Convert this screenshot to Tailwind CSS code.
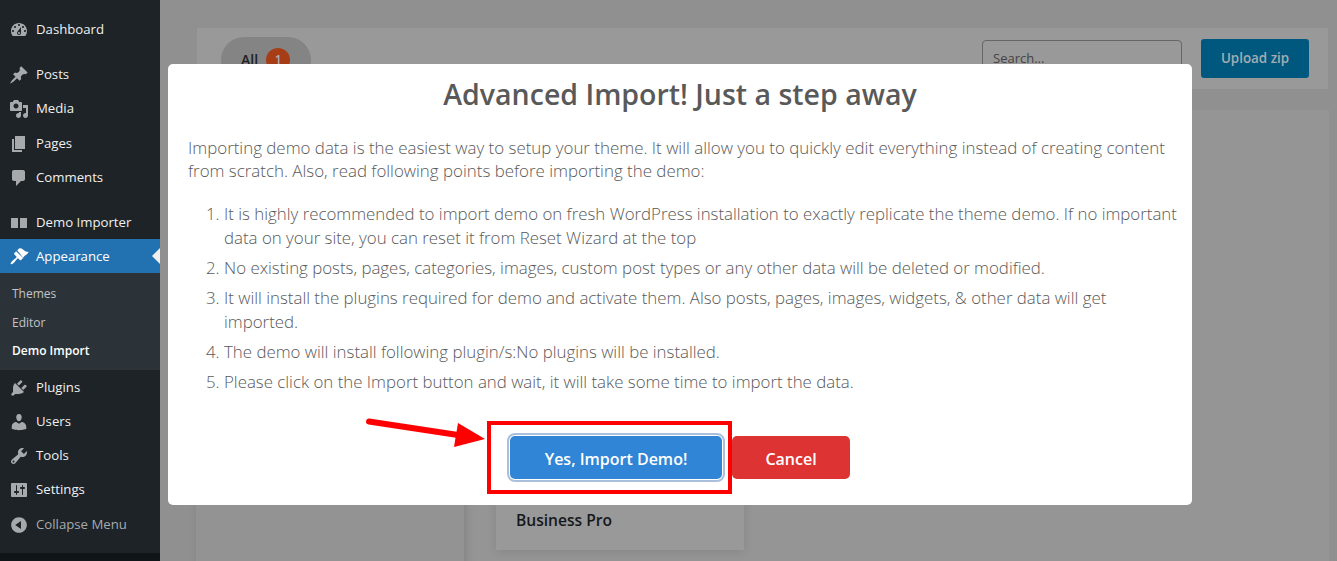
<!DOCTYPE html>
<html lang="en">
<head>
    <meta charset="UTF-8">
    <title>Demo Import</title>
    <script src="https://cdn.jsdelivr.net/npm/@tailwindcss/browser@4"></script>
</head>
<body class="w-[1337px] h-[561px] overflow-hidden flex font-['Open_Sans',sans-serif] bg-[#909090]">
    <!-- admin sidebar -->
    <nav class="w-[160px] h-full shrink-0 flex flex-col bg-[#1d2327] text-[13.2px] text-[#f0f0f1]">
        <div class="flex-1 pt-3">
            <a class="h-[34px] pt-[2px] flex items-center gap-[7px] pl-[9px]"><svg class="w-5 h-5 fill-[#a7aaad]" viewBox="0 0 20 20"><path d="M3.76 16h12.48c1.1-1.37 1.76-3.11 1.76-5 0-4.42-3.58-8-8-8s-8 3.58-8 8c0 1.89.66 3.63 1.76 5zM10 4c.55 0 1 .45 1 1s-.45 1-1 1-1-.45-1-1 .45-1 1-1zM6 6c.55 0 1 .45 1 1s-.45 1-1 1-1-.45-1-1 .45-1 1-1zm8 0c.55 0 1 .45 1 1s-.45 1-1 1-1-.45-1-1 .45-1 1-1zm-5.37 5.55L12 7v6c0 1.1-.9 2-2 2s-2-.9-2-2c0-.57.24-1.08.63-1.45zM4 10c.55 0 1 .45 1 1s-.45 1-1 1-1-.45-1-1 .45-1 1-1zm12 0c.55 0 1 .45 1 1s-.45 1-1 1-1-.45-1-1 .45-1 1-1zm-5 3c0-.55-.45-1-1-1s-1 .45-1 1 .45 1 1 1 1-.45 1-1z"/></svg>Dashboard</a>
            <a class="h-[34px] pt-[2px] mt-[11px] flex items-center gap-[7px] pl-[9px]"><svg class="w-5 h-5 fill-[#a7aaad]" viewBox="0 0 20 20"><path d="M10.44 3.02l1.82-1.82 6.36 6.35-1.83 1.82c-1.05-.68-2.48-.57-3.41.36l-.75.75c-.92.93-1.04 2.35-.35 3.41l-1.83 1.82-2.41-2.41-2.8 2.79c-.42.42-3.38 2.71-3.8 2.29s1.86-3.39 2.28-3.81l2.79-2.79L4.1 9.36l1.83-1.82c1.05.69 2.48.57 3.4-.36l.75-.75c.93-.92 1.05-2.35.36-3.41z"/></svg>Posts</a>
            <a class="h-[34px] pt-[2px] flex items-center gap-[7px] pl-[9px]"><svg class="w-5 h-5 fill-[#a7aaad]" viewBox="0 0 20 20"><path d="M13 11V4c0-.55-.45-1-1-1h-1.67L9 1H5L3.67 3H2c-.55 0-1 .45-1 1v7c0 .55.45 1 1 1h10c.55 0 1-.45 1-1zM7 4.5c1.38 0 2.5 1.12 2.5 2.5S8.38 9.5 7 9.5 4.5 8.38 4.5 7 5.62 4.5 7 4.5zM14 6h5v10.5c0 1.38-1.12 2.5-2.5 2.5S14 17.88 14 16.5s1.12-2.5 2.5-2.5c.17 0 .34.02.5.05V9h-3V6zm-4 8.05V13h2v3.5c0 1.38-1.12 2.5-2.5 2.5S7 17.88 7 16.5 8.12 14 9.5 14c.17 0 .34.02.5.05z"/></svg>Media</a>
            <a class="h-[35px] pt-[2px] flex items-center gap-[7px] pl-[9px]"><svg class="w-5 h-5 fill-[#a7aaad]" viewBox="0 0 20 20"><path d="M6 15V2h10v13H6zm-1 1h8v2H3V5h2v11z"/></svg>Pages</a>
            <a class="h-[34px] pt-[2px] flex items-center gap-[7px] pl-[9px]"><svg class="w-5 h-5 fill-[#a7aaad]" viewBox="0 0 20 20"><path d="M5 2h9c1.1 0 2 .9 2 2v7c0 1.1-.9 2-2 2h-2l-5 5v-5H5c-1.1 0-2-.9-2-2V4c0-1.1.9-2 2-2z"/></svg>Comments</a>
            <a class="h-[34px] pt-[2px] mt-[11px] flex items-center gap-[7px] pl-[9px]"><svg class="w-5 h-5 fill-[#a7aaad]" viewBox="0 0 20 20"><path d="M2 5h7v10H2zM11 5h7v10h-7z"/></svg>Demo Importer</a>
            <a class="relative h-[34px] pt-[2px] flex items-center gap-[7px] pl-[9px] bg-[#2271b1] text-white"><svg class="w-5 h-5 fill-white" viewBox="0 0 20 20"><path d="M8.2 3.2l1.6-1.5c1-.7 2.4-.5 3.6.3 1.3.9 1.8 1.6 3 2.2 1 .5 2 .7 3.2.5-.7 1.9-2 3-3.2 3.6-.8.4-1.2 1.1-1.7 1.7l-.6.7zM7.2 4.2l6.9 6.9-1.9 1.8c-.4.4-1 .4-1.4 0L9.6 11.7c-.4-.4-1-.4-1.4 0-.7.7-1.3 1.7-2 2.5-.3.4-.6.8-1 1.2-1.4 1.4-2.8 2.2-3.4 1.7s.3-2 1.7-3.4c.4-.4.8-.7 1.2-1 .8-.7 1.8-1.3 2.5-2 .4-.4.4-1 0-1.4L5.4 7.4c-.4-.4-.4-1 0-1.4z"/></svg>Appearance<span class="absolute right-0 top-[9px] border-y-8 border-r-8 border-y-transparent border-r-[#f0f0f1]"></span></a>
            <div class="h-[97px] pt-[6px] bg-[#2c3338] text-xs text-[#c3c4c7]">
                <a class="h-[29px] flex items-center pl-3">Themes</a>
                <a class="h-[29px] flex items-center pl-3">Editor</a>
                <a class="h-[28px] flex items-center pl-3 font-semibold text-white">Demo Import</a>
            </div>
            <a class="h-[34px] pt-[2px] flex items-center gap-[7px] pl-[9px]"><svg class="w-5 h-5 fill-[#a7aaad]" viewBox="0 0 20 20"><path d="M13.11 4.36L9.87 7.6 8 5.73l3.24-3.24c.35-.34 1.05-.2 1.56.32.52.51.66 1.21.31 1.55zm-8 1.77l.91-1.12 9.01 9.01-1.19.84c-.71.71-2.63 1.16-3.82 1.16H6.14L4.9 17.26c-.59.59-1.54.59-2.12 0-.59-.58-.59-1.53 0-2.12l1.24-1.24v-3.88c0-1.13.4-3.19 1.09-3.89zm7.26 3.97l3.24-3.24c.34-.35 1.04-.21 1.55.31.52.51.66 1.21.31 1.55l-3.24 3.25z"/></svg>Plugins</a>
            <a class="h-[34px] pt-[2px] flex items-center gap-[7px] pl-[9px]"><svg class="w-5 h-5 fill-[#a7aaad]" viewBox="0 0 20 20"><path d="M10 9.25c-2.27 0-2.73-3.44-2.73-3.44C7 4.02 7.82 2 9.97 2c2.16 0 2.98 2.02 2.71 3.81 0 0-.41 3.44-2.68 3.44zm0 2.57L12.72 10c2.39 0 4.52 2.33 4.52 4.53v2.49s-3.65 1.13-7.24 1.13c-3.65 0-7.24-1.13-7.24-1.13v-2.49c0-2.25 1.94-4.48 4.47-4.48z"/></svg>Users</a>
            <a class="h-[34px] pt-[2px] flex items-center gap-[7px] pl-[9px]"><svg class="w-5 h-5 fill-[#a7aaad]" viewBox="0 0 20 20"><path d="M16.68 9.77c-1.34 1.34-3.3 1.67-4.95.99l-5.41 6.52c-.99.99-2.59.99-3.58 0s-.99-2.59 0-3.57l6.52-5.42c-.68-1.65-.35-3.61.99-4.95 1.28-1.28 3.12-1.62 4.72-1.06l-2.89 2.89 2.82 2.82 2.86-2.87c.53 1.58.18 3.39-1.08 4.65zM3.81 16.21c.4.39 1.04.39 1.43 0 .4-.4.4-1.04 0-1.43-.39-.4-1.03-.4-1.43 0-.39.39-.39 1.03 0 1.43z"/></svg>Tools</a>
            <a class="h-[34px] pt-[2px] flex items-center gap-[7px] pl-[9px]"><svg class="w-5 h-5 fill-[#a7aaad]" viewBox="0 0 20 20"><path d="M18 16V4c0-.55-.45-1-1-1H3c-.55 0-1 .45-1 1v12c0 .55.45 1 1 1h14c.55 0 1-.45 1-1zM8 11h1c.55 0 1 .45 1 1s-.45 1-1 1H8v1.5c0 .28-.22.5-.5.5s-.5-.22-.5-.5V13H6c-.55 0-1-.45-1-1s.45-1 1-1h1V5.5c0-.28.22-.5.5-.5s.5.22.5.5V11zm5-2h-1c-.55 0-1-.45-1-1s.45-1 1-1h1V5.5c0-.28.22-.5.5-.5s.5.22.5.5V7h1c.55 0 1 .45 1 1s-.45 1-1 1h-1v5.5c0 .28-.22.5-.5.5s-.5-.22-.5-.5V9z"/></svg>Settings</a>
            <a class="h-[35px] pt-[2px] flex items-center gap-[7px] pl-[9px] text-[#a7aaad]"><svg class="w-5 h-5 fill-[#a7aaad]" viewBox="0 0 20 20"><path fill-rule="evenodd" d="M10 2.16c4.33 0 7.84 3.51 7.84 7.84s-3.51 7.84-7.84 7.84S2.16 14.33 2.16 10 5.71 2.16 10 2.16zm2 11.72V6.12L6.18 9.97z"/></svg>Collapse Menu</a>
        </div>
        <div class="h-[8px] bg-[#101517]"></div>
    </nav>

    <!-- page under the dialog, colours are already dimmed -->
    <main class="relative flex-1 h-full pl-9 pr-2 pt-[27px] overflow-hidden bg-[#909090]">
        <div class="h-[63px] flex items-center pl-6 pr-[19px] bg-[#999999] border border-[#8f8f8f]">
            <div class="flex items-center gap-2 h-[46px] mt-[2px] pl-5 pr-[21px] rounded-full bg-[#848484] text-sm font-semibold text-[#1e2124]">All<span class="w-6 h-6 flex items-center justify-center rounded-full bg-[#a63d17] text-xs text-[#b0b0b0]">1</span></div>
            <input class="ml-auto mb-[2px] w-[200px] h-[36px] px-[10px] text-[13px] border border-[#666666] rounded-[4px] bg-[#999999] placeholder:text-[#444444]" placeholder="Search...">
            <button class="ml-[19px] w-[108px] h-[39px] rounded-[3px] bg-[#00587e] text-[13.4px] font-semibold text-[#a3adb2]">Upload zip</button>
        </div>
        <div class="mt-5 h-[470px] flex bg-[#959595]">
            <div class="w-[268px] bg-[#939393] shadow-[2px_0_8px_rgba(0,0,0,0.12)]"></div>
            <div class="ml-8 w-[248px] h-[440px] flex flex-col justify-end px-5 pb-[18px] bg-[#999999] shadow-[0_2px_10px_rgba(0,0,0,0.1)]">
                <h3 class="text-[15.6px] font-semibold text-[#15181b]">Business Pro</h3>
            </div>
        </div>

        <!-- dialog -->
        <div class="absolute left-2 top-[64px] w-[1024px] h-[441px] pt-[10px] px-5 rounded-[5px] bg-white text-[#595959]">
            <h2 class="text-center text-[28.5px] leading-10 font-semibold">Advanced Import! Just a step away</h2>
            <p class="mt-[22px] text-[16.9px] leading-[23px] font-light">Importing demo data is the easiest way to setup your theme. It will allow you to quickly edit everything instead of creating content from scratch. Also, read following points before importing the demo:</p>
            <ol class="mt-[20px] -mr-2 pl-9 list-decimal text-[16.85px] leading-6 font-light">
                <li class="mb-[6px]">It is highly recommended to import demo on fresh WordPress installation to exactly replicate the theme demo. If no important data on your site, you can reset it from Reset Wizard at the top</li>
                <li class="mb-[6px]">No existing posts, pages, categories, images, custom post types or any other data will be deleted or modified.</li>
                <li class="mb-[6px]">It will install the plugins required for demo and activate them. Also posts, pages, images, widgets, &amp; other data will get imported.</li>
                <li class="mb-[6px]">The demo will install following plugin/s:No plugins will be installed.</li>
                <li>Please click on the Import button and wait, it will take some time to import the data.</li>
            </ol>
            <div class="absolute left-[342px] top-[372px] flex gap-[10px]">
                <button class="w-[212px] h-[43px] pt-[2px] rounded-[5px] bg-[#3085d6] text-[16px] font-semibold text-white shadow-[0_0_0_1px_#fff,0_0_0_3px_#a9bfdb]">Yes, Import Demo!</button>
                <button class="w-[118px] h-[43px] pt-[2px] rounded-[5px] bg-[#dd3333] text-[16px] font-semibold text-white">Cancel</button>
            </div>
            <div class="absolute left-[319px] top-[357px] w-[245px] h-[73px] border-4 border-[#ff0000]"></div>
            <svg class="absolute left-[198px] top-[349px]" width="122" height="40" viewBox="0 0 122 40"><path d="M3 8.5L92 22" stroke="#ff0000" stroke-width="6" stroke-linecap="round"/><path d="M92 10L119 26L88 34Z" fill="#ff0000"/></svg>
        </div>
    </main>
</body>
</html>
